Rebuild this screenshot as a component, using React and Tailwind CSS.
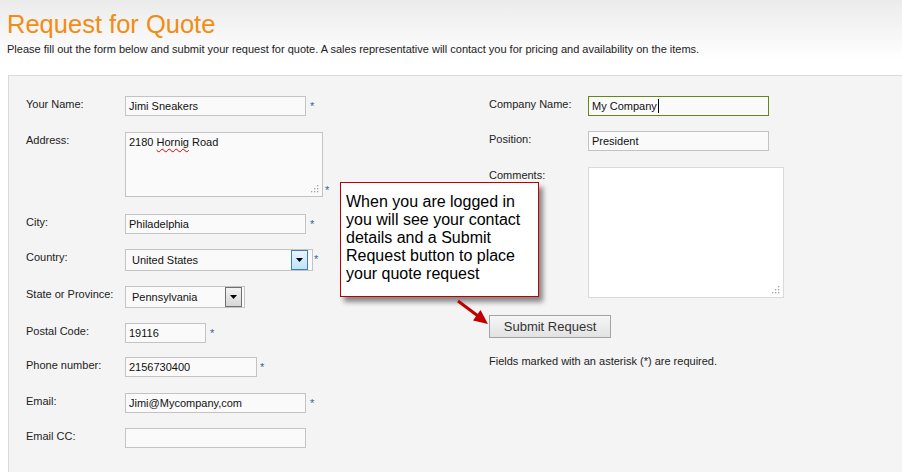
import React from "react";

const Star = ({ className = "" }) => (
  <span className={"text-[11px] leading-none text-[#3b5f94] " + className}>*</span>
);

const Label = ({ children }) => (
  <div className="w-[99px] shrink-0 pt-[2px] text-[11px] leading-[13px] text-[#222]">{children}</div>
);

const Field = ({ w, value, children }) => (
  <div
    className="h-[20px] border border-[#c3c3c3] bg-[#fafafa] px-[3px] text-[11px] leading-[18px] text-[#111]"
    style={{ width: w }}
  >
    {value}
    {children}
  </div>
);

const Grip = () => (
  <svg width="10" height="10" viewBox="0 0 10 10" className="absolute right-[3px] bottom-[3px]">
    {[
      [8, 2],
      [5, 5],
      [8, 5],
      [2, 8],
      [5, 8],
      [8, 8],
    ].map(([x, y], i) => (
      <rect key={i} x={x} y={y} width="1.3" height="1.3" fill="#a0a0a0" />
    ))}
  </svg>
);

const DropBtn = ({ blue }) => (
  <div
    className={
      "flex h-[20px] w-[17px] items-center justify-center border " +
      (blue
        ? "border-[#3c7fb1] bg-[linear-gradient(#e9f5fd,#bfe3f8)]"
        : "border-[#707070] bg-[linear-gradient(#f2f2f2,#d6d6d6)]")
    }
  >
    <svg width="7" height="4" viewBox="0 0 7 4">
      <polygon points="0,0 7,0 3.5,4" fill="#000" />
    </svg>
  </div>
);

export default function App() {
  return (
    <div
      className="min-h-[472px] w-full bg-white"
      style={{ fontFamily: '"Liberation Sans", Arial, sans-serif' }}
    >
      <div className="bg-[linear-gradient(#ebebeb,#ffffff_60px)] px-[7px] pt-[9px] pb-[19px]">
        <h1 className="text-[25.5px] leading-[30px] font-normal text-[#f28c12]">Request for Quote</h1>
        <p className="mt-[4px] text-[11px] leading-[13px] text-[#222]">
          Please fill out the form below and submit your request for quote. A sales representative will
          contact you for pricing and availability on the items.
        </p>
      </div>

      <div className="relative ml-[8px] h-[397px] border-t border-l border-[#dadada] bg-[#f4f4f4]">
        <div className="flex pt-[20px]">
          {/* Left column */}
          <div className="flex w-[480px] shrink-0 flex-col pl-[17px]">
            <div className="flex">
              <Label>Your Name:</Label>
              <Field w={181} value="Jimi Sneakers" />
              <Star className="mt-[5px] ml-[4px]" />
            </div>

            <div className="mt-[16px] flex">
              <Label>Address:</Label>
              <div className="relative h-[65px] w-[198px] border border-[#c3c3c3] bg-[#fafafa] px-[3px] pt-[3px] text-[11px] leading-[13px] text-[#111]">
                2180{" "}
                <span className="underline decoration-[#e00000] decoration-wavy decoration-1 underline-offset-2">
                  Hornig
                </span>{" "}
                Road
                <Grip />
              </div>
              <Star className="mt-[53px] ml-[2px]" />
            </div>

            <div className="mt-[17px] flex">
              <Label>City:</Label>
              <Field w={181} value="Philadelphia" />
              <Star className="mt-[5px] ml-[4px]" />
            </div>

            <div className="mt-[15px] flex">
              <Label>Country:</Label>
              <div className="flex h-[22px] w-[188px] items-center justify-between border border-[#c3c3c3] bg-[#fafafa] pr-[4px] pl-[6px] text-[11px] text-[#111]">
                <span>United States</span>
                <DropBtn blue />
              </div>
              <Star className="mt-[5px] ml-[1px]" />
            </div>

            <div className="mt-[15px] flex">
              <Label>State or Province:</Label>
              <div className="flex h-[22px] w-[120px] items-center justify-between border border-[#c3c3c3] bg-[#fafafa] pr-[2px] pl-[6px] text-[11px] text-[#111]">
                <span>Pennsylvania</span>
                <DropBtn />
              </div>
            </div>

            <div className="mt-[15px] flex">
              <Label>Postal Code:</Label>
              <Field w={81} value="19116" />
              <Star className="mt-[5px] ml-[4px]" />
            </div>

            <div className="mt-[14px] flex">
              <Label>Phone number:</Label>
              <Field w={132} value="2156730400" />
              <Star className="mt-[5px] ml-[3px]" />
            </div>

            <div className="mt-[16px] flex">
              <Label>Email:</Label>
              <Field w={181} value="Jimi@Mycompany,com" />
              <Star className="mt-[5px] ml-[4px]" />
            </div>

            <div className="mt-[15px] flex">
              <Label>Email CC:</Label>
              <Field w={181} value="" />
            </div>
          </div>

          {/* Right column */}
          <div className="flex flex-col">
            <div className="flex">
              <Label>Company Name:</Label>
              <div className="flex h-[20px] w-[181px] items-center border border-[#66861a] bg-[#fafafa] px-[3px] text-[11px] text-[#111]">
                My Company
                <span className="ml-[1px] inline-block h-[14px] w-[1px] bg-black" />
              </div>
            </div>

            <div className="mt-[15px] flex">
              <Label>Position:</Label>
              <Field w={181} value="President" />
            </div>

            <div className="mt-[16px] flex">
              <Label>Comments:</Label>
              <div className="relative h-[131px] w-[196px] border border-[#d9d9d9] bg-white">
                <Grip />
              </div>
            </div>

            <button className="mt-[17px] h-[23px] w-[122px] border border-[#a3a3a3] bg-[linear-gradient(#f6f6f6,#e2e2e2)] text-[13px] leading-[21px] text-[#333]">
              Submit Request
            </button>

            <p className="mt-[17px] text-[11px] leading-[13px] text-[#222]">
              Fields marked with an asterisk (*) are required.
            </p>
          </div>
        </div>

        {/* Callout overlay */}
        <div className="absolute top-[106px] left-[331px] h-[115px] w-[199px] border border-[#c00000] bg-white pt-[10px] pl-[5px] text-[16px] leading-[18px] text-black shadow-[4px_5px_5px_rgba(0,0,0,0.45)]">
          When you are logged in
          <br />
          you will see your contact
          <br />
          details and a Submit
          <br />
          Request button to place
          <br />
          your quote request
        </div>

        <svg
          className="absolute top-[219px] left-[441px]"
          width="45"
          height="35"
          viewBox="0 0 45 35"
        >
          <line x1="8" y1="6" x2="28" y2="21" stroke="#c00000" strokeWidth="3" />
          <polygon points="38,29 23,25.5 30.5,15" fill="#c00000" />
        </svg>
      </div>
    </div>
  );
}
